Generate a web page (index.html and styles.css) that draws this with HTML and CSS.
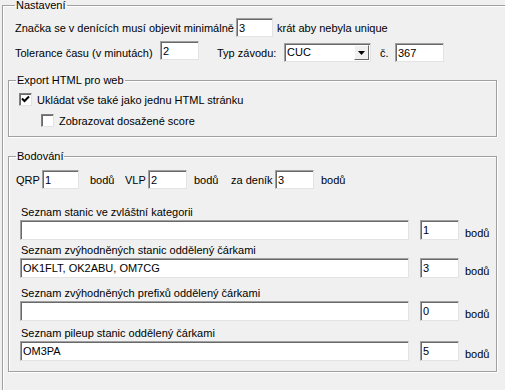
FILE: index.html
```html
<!DOCTYPE html>
<html lang="cs">
<head>
<meta charset="utf-8">
<title>Nastavení</title>
<link rel="stylesheet" href="styles.css">
</head>
<body>
<fieldset class="group group-main">
    <legend>Nastavení</legend>
    <div class="row row-unique">
        <span class="lbl lbl-unique">Značka se v denících musí objevit minimálně</span>
        <span class="edit w37">3</span>
        <span class="lbl lbl-after">krát aby nebyla unique</span>
    </div>
    <div class="row row-time">
        <span class="lbl lbl-time">Tolerance času (v minutách)</span>
        <span class="edit w39">2</span>
        <span class="lbl lbl-type">Typ závodu:</span>
        <span class="combo">
            <span class="combo-text">CUC</span>
            <span class="combo-btn"><svg width="7" height="4" viewBox="0 0 7 4"><path d="M0 0h7L3.5 4z" fill="#000"/></svg></span>
        </span>
        <span class="lbl lbl-no">č.</span>
        <span class="edit w49 edit-low">367</span>
    </div>

    <fieldset class="group group-sub group-export">
        <legend>Export HTML pro web</legend>
        <div class="check-row">
            <span class="check"><svg width="9" height="9" viewBox="0 0 9 9"><path d="M1 3.5l2.5 2.5L8 1.5" fill="none" stroke="#000" stroke-width="2"/></svg></span>
            <span class="lbl">Ukládat vše také jako jednu HTML stránku</span>
        </div>
        <div class="check-row check-row-sub">
            <span class="check"></span>
            <span class="lbl">Zobrazovat dosažené score</span>
        </div>
    </fieldset>

    <fieldset class="group group-sub group-score">
        <legend>Bodování</legend>
        <div class="row row-points">
            <span class="lbl lbl-qrp">QRP</span>
            <span class="edit w37">1</span>
            <span class="lbl lbl-pts1">bodů</span>
            <span class="lbl lbl-vlp">VLP</span>
            <span class="edit w39">2</span>
            <span class="lbl lbl-pts2">bodů</span>
            <span class="lbl lbl-log">za deník</span>
            <span class="edit w39">3</span>
            <span class="lbl lbl-pts3">bodů</span>
        </div>

        <div class="list list-first">
            <div class="list-title">Seznam stanic ve zvláštní kategorii</div>
            <div class="list-row">
                <span class="edit list-edit"></span>
                <span class="edit w39">1</span>
                <span class="lbl">bodů</span>
            </div>
        </div>
        <div class="list">
            <div class="list-title">Seznam zvýhodněných stanic oddělený čárkami</div>
            <div class="list-row">
                <span class="edit list-edit">OK1FLT, OK2ABU, OM7CG</span>
                <span class="edit w39">3</span>
                <span class="lbl">bodů</span>
            </div>
        </div>
        <div class="list list-gap">
            <div class="list-title">Seznam zvýhodněných prefixů oddělený čárkami</div>
            <div class="list-row">
                <span class="edit list-edit"></span>
                <span class="edit w39">0</span>
                <span class="lbl">bodů</span>
            </div>
        </div>
        <div class="list list-last">
            <div class="list-title">Seznam pileup stanic oddělený čárkami</div>
            <div class="list-row">
                <span class="edit list-edit">OM3PA</span>
                <span class="edit w39">5</span>
                <span class="lbl">bodů</span>
            </div>
        </div>
    </fieldset>
</fieldset>
</body>
</html>
```

FILE: styles.css
```css
body {
    margin: 0;
    background-color: #f0f0f0;
    font-family: "Liberation Sans", Arial, sans-serif;
    font-size: 11px;
    color: #000;
    overflow: hidden;
}
.group {
    margin: 0;
    padding: 0;
    border: 1px solid #a0a0a0;
    box-shadow: inset 1px 1px 0 #fff, 1px 1px 0 #fff;
}
.group legend {
    margin-left: 7px;
    padding: 0 1px;
    line-height: 13px;
}
.group-main {
    margin: -1px 0 0 2px;
    padding-left: 5px;
    width: 503px;
    height: 391px;
    box-sizing: border-box;
    border-right: none;
    border-bottom: none;
    box-shadow: inset 1px 1px 0 #fff;
}
.group-sub {
    width: 489px;
    box-sizing: border-box;
}
.row {
    display: flex;
    align-items: center;
    padding-left: 7px;
}
.lbl {
    white-space: nowrap;
}
.edit {
    display: block;
    box-sizing: border-box;
    height: 19px;
    padding: 2px 2px 0;
    line-height: 14px;
    background: #fff;
    border: 1px solid;
    border-color: #a0a0a0 #e3e3e3 #e3e3e3 #a0a0a0;
    box-shadow: inset 1px 1px 0 #696969;
    white-space: nowrap;
}
.w37 { width: 37px; }
.w39 { width: 39px; }
.w49 { width: 49px; }

/* Nastavení */
.row-unique {
    margin-top: 6px;
}
.lbl-unique { width: 221px; }
.lbl-after { margin-left: 4px; }
.row-time {
    margin-top: 4px;
    align-items: flex-start;
}
.row-time .lbl { margin-top: 6px; }
.lbl-time { width: 145px; }
.lbl-type { margin-left: 18px; width: 67px; }
.lbl-no { margin-left: 9px; width: 15px; }
.edit-low { margin-top: 2px; }
.combo {
    display: flex;
    box-sizing: border-box;
    width: 87px;
    height: 19px;
    margin-top: 2px;
    background: #fff;
    border: 1px solid;
    border-color: #a0a0a0 #e3e3e3 #e3e3e3 #a0a0a0;
    box-shadow: inset 1px 1px 0 #696969;
    padding: 1px 1px 1px 2px;
}
.combo-text {
    flex: 1;
    line-height: 15px;
}
.combo-btn {
    display: flex;
    align-items: center;
    justify-content: center;
    width: 15px;
    background: #f0f0f0;
    border: 1px solid;
    border-color: #fff #696969 #696969 #fff;
    box-sizing: border-box;
}

/* Export */
.group-export {
    margin-top: 12px;
    height: 63px;
}
.check-row {
    display: flex;
    align-items: center;
    gap: 5px;
    margin: 6px 0 0 10px;
}
.check-row-sub {
    margin: 8px 0 0 32px;
}
.check {
    display: flex;
    align-items: center;
    justify-content: center;
    box-sizing: border-box;
    width: 13px;
    height: 13px;
    background: #fff;
    border: 1px solid;
    border-color: #808080 #e3e3e3 #e3e3e3 #808080;
    box-shadow: inset 1px 1px 0 #696969;
}

/* Bodování */
.group-score {
    margin-top: 13px;
    padding-bottom: 10px;
}
.row-points {
    margin-top: 7px;
}
.lbl-qrp { width: 26px; }
.lbl-pts1 { margin-left: 11px; width: 35px; }
.lbl-vlp { width: 23px; }
.lbl-pts2 { margin-left: 7px; width: 37px; }
.lbl-log { width: 44px; }
.lbl-pts3 { margin-left: 7px; }
.list {
    padding-left: 11px;
    margin-top: 3px;
}
.list-first { margin-top: 16px; }
.list-gap { margin-top: 8px; }
.list-last { margin-top: 5px; }
.list-title {
    line-height: 14px;
    padding-left: 1px;
}
.list-row {
    display: flex;
    align-items: center;
    margin-top: 1px;
}
.list-edit {
    width: 389px;
    height: 20px;
}
.list-row .w39 {
    margin-left: 11px;
    height: 20px;
}
.list-row .lbl {
    margin: 5px 0 0 6px;
}
```
